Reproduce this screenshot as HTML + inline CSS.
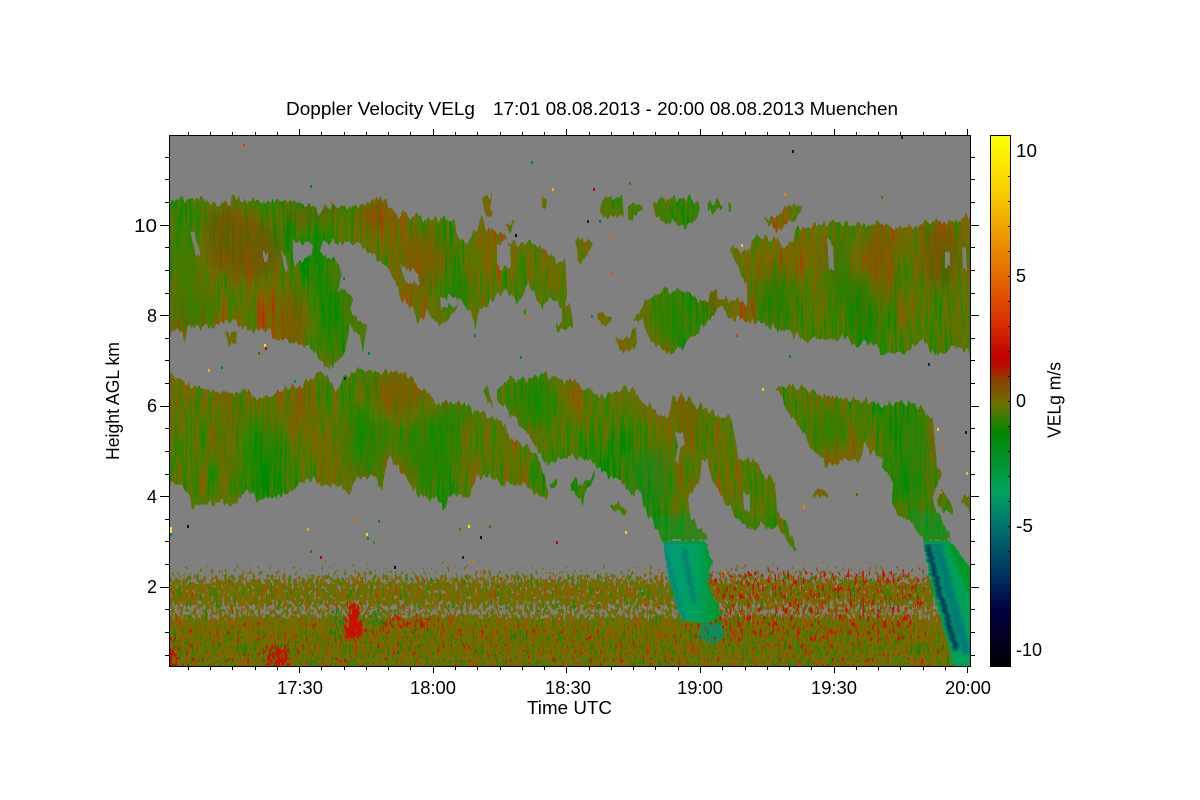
<!DOCTYPE html>
<html lang="en">
<head>
<meta charset="utf-8">
<title>Doppler Velocity VELg</title>
<style>
html,body{margin:0;padding:0;background:#fff;width:1200px;height:800px;overflow:hidden}
svg{display:block}
text{font-family:"Liberation Sans",sans-serif;font-size:18px;fill:#000}
</style>
</head>
<body>
<svg width="1200" height="800" viewBox="0 0 1200 800" xmlns="http://www.w3.org/2000/svg">
<defs>
<path id="clouds" fill-rule="evenodd" clip-rule="evenodd" d="
M165 203L178 199 207 199 211 207 214 203 230 203 231 198 240 198 243 201 290 201 305 204 317 209 319 212 322 207 337 205 363 205 372 199 381 198 390 207 398 215 406 213 427 222 440 217 455 223 458 237 465 243 477 230 482 218 487 230 503 233 508 243 520 242 532 243 550 256 553 258 558 262 565 258 566 277 567 297 565 303 570 307 573 320 573 327 557 330 556 323 562 320 562 307 557 303 550 297 542 308 533 290 528 283 518 303 507 290 493 298 485 310 480 307 475 330 470 312 458 297 457 307 442 327 427 313 417 320 412 305 400 300 398 287 392 278 390 270 377 258 363 245 350 245 343 243 323 243 320 250 323 258 335 258 342 272 338 288 353 298 350 310 367 327 363 350 360 337 350 325 345 350 337 363 327 368 317 357 310 347 290 340 278 340 267 329 247 331 233 320 210 327 187 327 185 340 178 329 165 335Z
M190 231L194 232 200 250 200 254 196 253 192 240Z
M263 250L268 249 268 258 263 258Z
M281 252L286 254 288 270 284 266Z
M293 245L306 243 313 250 311 258 300 262 296 268 293 258Z
M400 265L410 270 418 272 420 285 405 282Z
M440 298L457 297 458 305 447 306 441 310Z
M497 245L510 240 511 268 497 268Z
M482 197L492 196 490 205 493 215 488 218 484 212Z
M225 332L237 332 236 343 228 343Z
M505 228L510 222 515 227 512 230Z
M542 198L547 198 546 207 542 207Z
M601 205L604 198 612 197 622 198 624 215 616 216 612 215 608 216 600 214Z
M628 205L642 205 643 210 636 215 632 220 628 218Z
M653 205L660 198 668 199 690 198 697 203 700 205 697 218 693 225 682 226 675 224 668 223 660 219 655 215Z
M708 204L716 202 723 204 720 210 712 212 708 212Z
M728 202L731 202 731 211 729 211Z
M762 223L772 218 780 214 785 207 795 206 803 207 800 215 795 222 785 224 780 228 777 233 770 225Z
M575 242L581 239 593 243 590 252 585 256 581 265 578 262 577 250Z
M597 314L603 316 612 319 610 325 604 325 602 333 600 325Z
M615 340L625 338 633 330 636 328 637 345 630 350 620 350Z
M633 322L638 313 645 302 655 296 662 291 675 290 688 293 695 297 700 301 708 302 711 291 717 291 718 300 728 299 745 302 747 303 747 283 743 277 738 267 730 250 732 245 742 253 750 250 752 238 767 237 778 240 783 248 793 240 795 230 805 227 837 223 867 225 880 223 893 227 917 227 927 222 950 222 967 217 975 215 975 352 970 352 953 347 943 357 933 353 923 340 908 352 887 350 883 355 875 343 850 345 848 337 823 340 813 337 807 342 790 332 780 330 767 325 747 320 727 317 723 308 717 308 707 323 697 335 690 338 683 348 665 352 653 343 647 333 643 320Z
M827 240L833 242 834 270 829 268Z
M945 253L950 253 950 267 945 265Z
M962 247L966 247 967 270 963 268Z
M165 372L170 373 185 383 203 387 225 393 247 392 257 398 273 397 282 388 300 388 308 382 318 372 332 380 335 390 343 380 358 370 383 372 403 373 417 383 433 397 435 403 460 402 473 410 500 420 512 440 527 448 538 457 543 473 548 487 548 497 542 497 527 485 503 483 493 478 478 477 467 498 453 493 443 508 437 498 420 497 413 490 400 470 390 458 387 463 382 488 375 477 357 477 350 493 343 487 320 485 313 477 293 490 273 498 257 500 247 488 233 508 223 502 197 505 193 512 188 493 182 485 165 485Z
M483 387L487 388 493 405 493 408 488 403Z
M497 390L510 377 525 380 543 375 567 380 590 390 600 398 620 390 632 388 643 403 655 410 665 418 668 418 672 400 680 396 700 405 715 412 732 417 738 457 757 463 767 477 775 480 777 513 785 517 790 533 797 548 792 547 780 530 760 525 757 530 747 528 740 520 727 505 715 487 707 460 702 460 700 477 688 500 690 517 707 537 707 541 663 541 653 523 643 507 642 490 630 495 623 487 615 477 610 478 600 468 585 458 570 455 545 465 542 457 527 433 513 417 497 400Z
M675 432L683 433 685 445 680 453 678 463 675 460 678 448Z
M743 493L750 493 750 513 744 510Z
M610 505L618 503 627 507 626 511 612 510Z
M813 490L822 490 828 493 828 497 814 497Z
M570 482L576 481 582 487 590 482 594 470 595 478 590 488 585 495 583 503 578 497 572 492Z
M550 481L557 480 557 486 551 487Z
M775 388L800 385 813 393 833 397 870 402 883 407 897 402 917 405 933 420 937 467 942 473 940 480 935 490 933 502 947 530 951 541 923 541 910 520 898 520 892 500 893 483 887 470 882 470 883 457 870 452 865 443 860 463 850 458 827 467 808 443 797 420 788 413 782 397Z
M937 495L943 493 953 505 953 515 945 512 938 505Z
M960 497L966 495 975 500 975 513 968 510Z"/>
<clipPath id="cc"><use href="#clouds"/></clipPath>
<clipPath id="plot"><rect x="170" y="136" width="800" height="530"/></clipPath>
<clipPath id="s1"><path d="M663 540L705 540 712 560 708 583 722 615 712 622 700 623 681 620 668 577Z"/></clipPath>
<clipPath id="s2"><path d="M923 540L950 540 958 552 970 567 975 567 975 666 953 666 947 640 935 600 928 570Z"/></clipPath>
<clipPath id="above"><rect x="600" y="541" width="400" height="130"/></clipPath>

<filter id="disp" filterUnits="userSpaceOnUse" x="150" y="125" width="840" height="560" color-interpolation-filters="sRGB">
  <feTurbulence type="fractalNoise" baseFrequency=".25 .03" numOctaves="2" seed="4"/>
  <feColorMatrix values="1 0 0 0 0 0 0 0 0 .5 0 0 1 0 0 0 0 0 0 1" result="j"/>
  <feDisplacementMap in="SourceGraphic" in2="j" scale="16" xChannelSelector="G" yChannelSelector="R"/>
</filter>

<filter id="dispx" filterUnits="userSpaceOnUse" x="640" y="530" width="340" height="145" color-interpolation-filters="sRGB">
  <feTurbulence type="fractalNoise" baseFrequency=".03 .3" numOctaves="2" seed="9"/>
  <feColorMatrix values="1 0 0 0 0 0 0 0 0 .5 0 0 1 0 0 0 0 0 0 1" result="j"/>
  <feDisplacementMap in="SourceGraphic" in2="j" scale="5" xChannelSelector="R" yChannelSelector="G"/>
</filter>

<filter id="tex" filterUnits="userSpaceOnUse" x="150" y="125" width="840" height="560" color-interpolation-filters="sRGB">
  <feTurbulence type="fractalNoise" baseFrequency=".4 .024" numOctaves="3" seed="11"/>
  <feColorMatrix values="1 0 0 0 0 1 0 0 0 0 1 0 0 0 0 0 0 0 0 1" result="fine"/>
  <feTurbulence type="fractalNoise" baseFrequency=".014 .007" numOctaves="2" seed="5"/>
  <feColorMatrix values="1 0 0 0 0 1 0 0 0 0 1 0 0 0 0 0 0 0 0 1" result="coarse"/>
  <feComposite in="fine" in2="coarse" operator="arithmetic" k1="0" k2=".85" k3=".6" k4="-.225"/>
  <feComponentTransfer>
    <feFuncR type="table" tableValues="0 0 0 .1 .24 .35 .44 .53 .64 .74 .8"/>
    <feFuncG type="table" tableValues=".5 .52 .54 .54 .5 .46 .43 .37 .28 .16 .1"/>
    <feFuncB type="table" tableValues="0 0 0 0 0 0 0 0 0 0 0"/>
    <feFuncA type="linear" slope="1" intercept="0"/>
  </feComponentTransfer>
  <feComposite in2="SourceAlpha" operator="in"/>
</filter>

<filter id="spk" filterUnits="userSpaceOnUse" x="170" y="540" width="800" height="126" color-interpolation-filters="sRGB">
  <feTurbulence type="fractalNoise" baseFrequency=".36 .2" numOctaves="2" seed="3"/>
  <feColorMatrix values="0 0 0 0 0 0 0 0 0 0 0 0 0 0 0 1 0 0 0 0" result="na"/>
  <feComposite in="na" in2="SourceAlpha" operator="arithmetic" k1="0" k2="1" k3="1" k4="-1"/>
  <feComponentTransfer result="mask"><feFuncA type="linear" slope="40" intercept="0"/></feComponentTransfer>
  <feTurbulence type="fractalNoise" baseFrequency=".38 .07" numOctaves="3" seed="21"/>
  <feColorMatrix values="1 0 0 0 0 1 0 0 0 0 1 0 0 0 0 0 0 0 0 1"/>
  <feComponentTransfer>
    <feFuncR type="table" tableValues=".1 .1 .15 .25 .38 .46 .52 .58 .66 .74 .8"/>
    <feFuncG type="table" tableValues=".5 .5 .5 .48 .46 .43 .4 .34 .26 .12 .05"/>
    <feFuncB type="table" tableValues="0 0 0 0 0 0 0 0 0 0 0"/>
  </feComponentTransfer>
  <feComposite in2="mask" operator="in"/>
</filter>

<filter id="spkR" filterUnits="userSpaceOnUse" x="170" y="540" width="800" height="126" color-interpolation-filters="sRGB">
  <feTurbulence type="fractalNoise" baseFrequency=".4 .14" numOctaves="2" seed="31"/>
  <feColorMatrix values="0 0 0 0 0 0 0 0 0 0 0 0 0 0 0 1 0 0 0 0" result="na"/>
  <feComposite in="na" in2="SourceAlpha" operator="arithmetic" k1="0" k2="1" k3="1" k4="-1"/>
  <feComponentTransfer result="mask"><feFuncA type="linear" slope="40" intercept="0"/></feComponentTransfer>
  <feFlood flood-color="#c81000"/>
  <feComposite in2="mask" operator="in"/>
</filter>

<filter id="spkG" filterUnits="userSpaceOnUse" x="170" y="540" width="800" height="126" color-interpolation-filters="sRGB">
  <feTurbulence type="fractalNoise" baseFrequency=".4 .2" numOctaves="2" seed="41"/>
  <feColorMatrix values="0 0 0 0 0 0 0 0 0 0 0 0 0 0 0 1 0 0 0 0" result="na"/>
  <feComposite in="na" in2="SourceAlpha" operator="arithmetic" k1="0" k2="1" k3="1" k4="-1"/>
  <feComponentTransfer result="mask"><feFuncA type="linear" slope="40" intercept="0"/></feComponentTransfer>
  <feFlood flood-color="#008a20"/>
  <feComposite in2="mask" operator="in"/>
</filter>

<filter id="spkT" filterUnits="userSpaceOnUse" x="170" y="540" width="800" height="126" color-interpolation-filters="sRGB">
  <feTurbulence type="fractalNoise" baseFrequency=".4 .3" numOctaves="2" seed="51"/>
  <feColorMatrix values="0 0 0 0 0 0 0 0 0 0 0 0 0 0 0 1 0 0 0 0" result="na"/>
  <feComposite in="na" in2="SourceAlpha" operator="arithmetic" k1="0" k2="1" k3="1" k4="-1"/>
  <feComponentTransfer result="mask"><feFuncA type="linear" slope="40" intercept="0"/></feComponentTransfer>
  <feFlood flood-color="#009068"/>
  <feComposite in2="mask" operator="in"/>
</filter>

<filter id="b8" x="-100%" y="-100%" width="300%" height="300%"><feGaussianBlur stdDeviation="7"/></filter>
<filter id="b3" x="-100%" y="-100%" width="300%" height="300%"><feGaussianBlur stdDeviation="3"/></filter>
<filter id="bd" filterUnits="userSpaceOnUse" x="150" y="540" width="840" height="146"><feGaussianBlur stdDeviation="4"/></filter>
<filter id="b1" filterUnits="userSpaceOnUse" x="650" y="530" width="330" height="145"><feGaussianBlur stdDeviation="1.6"/></filter>

<linearGradient id="dens" gradientUnits="userSpaceOnUse" x1="0" y1="560" x2="0" y2="666">
  <stop offset="0" stop-opacity=".2"/>
  <stop offset=".094" stop-opacity=".34"/>
  <stop offset=".17" stop-opacity=".5"/>
  <stop offset=".236" stop-opacity=".66"/>
  <stop offset=".349" stop-opacity=".7"/>
  <stop offset=".406" stop-opacity=".62"/>
  <stop offset=".453" stop-opacity=".52"/>
  <stop offset=".509" stop-opacity=".52"/>
  <stop offset=".547" stop-opacity=".62"/>
  <stop offset=".585" stop-opacity=".82"/>
  <stop offset="1" stop-opacity=".95"/>
</linearGradient>

<linearGradient id="cb" x1="0" y1="0" x2="0" y2="1">
  <stop offset="0" stop-color="#ffff00"/>
  <stop offset=".103" stop-color="#f8d000"/>
  <stop offset=".229" stop-color="#e88000"/>
  <stop offset=".291" stop-color="#e05800"/>
  <stop offset=".353" stop-color="#d83000"/>
  <stop offset=".417" stop-color="#c00000"/>
  <stop offset=".436" stop-color="#b81000"/>
  <stop offset=".46" stop-color="#8a4000"/>
  <stop offset=".504" stop-color="#707000"/>
  <stop offset=".56" stop-color="#008800"/>
  <stop offset=".673" stop-color="#00a060"/>
  <stop offset=".737" stop-color="#007070"/>
  <stop offset=".831" stop-color="#003060"/>
  <stop offset=".893" stop-color="#000040"/>
  <stop offset="1" stop-color="#000000"/>
</linearGradient>

<linearGradient id="sg1" gradientUnits="userSpaceOnUse" x1="663" y1="0" x2="718" y2="0">
  <stop offset="0" stop-color="#009a78"/>
  <stop offset=".55" stop-color="#00a060"/>
  <stop offset="1" stop-color="#009830"/>
</linearGradient>
</defs>

<rect width="1200" height="800" fill="#fff"/>
<rect x="170" y="136" width="800" height="530" fill="#808080"/>

<g clip-path="url(#plot)">
  <!-- low level noise -->
  <g filter="url(#spk)"><rect x="170" y="560" width="800" height="106" fill="url(#dens)"/></g>
  <g filter="url(#spkR)">
    <g filter="url(#bd)">
      <rect x="150" y="620" width="540" height="62" fill="#000" fill-opacity=".31"/>
      <rect x="690" y="566" width="240" height="74" fill="#000" fill-opacity=".39"/>
      <rect x="690" y="640" width="300" height="40" fill="#000" fill-opacity=".31"/>
      <rect x="345" y="600" width="17" height="38" fill="#000" fill-opacity=".66"/>
      <rect x="380" y="608" width="60" height="20" fill="#000" fill-opacity=".34"/>
      <rect x="150" y="645" width="28" height="30" fill="#000" fill-opacity=".42"/>
      <rect x="265" y="645" width="25" height="30" fill="#000" fill-opacity=".4"/>
    </g>
  </g>
  <g filter="url(#spkG)">
    <g filter="url(#bd)">
      <rect x="330" y="605" width="15" height="26" fill="#000" fill-opacity=".5"/>
      <rect x="365" y="605" width="20" height="24" fill="#000" fill-opacity=".46"/>
      <rect x="150" y="630" width="840" height="50" fill="#000" fill-opacity=".32"/>
    </g>
  </g>
  <g filter="url(#spkT)">
    <g filter="url(#bd)"><rect x="698" y="620" width="28" height="24" fill="#000" fill-opacity=".65"/></g>
  </g>

  <!-- clouds -->
  <g filter="url(#disp)">
    <g filter="url(#tex)"><use href="#clouds" fill="#000"/></g>
    <g clip-path="url(#cc)">
      <g filter="url(#b8)" opacity=".5">
        <ellipse cx="228" cy="240" rx="32" ry="32" fill="#b03000"/>
        <ellipse cx="375" cy="215" rx="16" ry="12" fill="#b03000"/>
        <ellipse cx="295" cy="318" rx="13" ry="28" fill="#8a4c00"/>
        <ellipse cx="310" cy="215" rx="30" ry="10" fill="#8a5000"/>
        <ellipse cx="712" cy="300" rx="8" ry="10" fill="#a83000"/>
        <ellipse cx="880" cy="265" rx="16" ry="42" fill="#8a4c00"/>
        <ellipse cx="940" cy="255" rx="18" ry="32" fill="#8a4000"/>
        <ellipse cx="425" cy="260" rx="25" ry="30" fill="#8a5000"/>
        <ellipse cx="300" cy="400" rx="8" ry="20" fill="#a04800"/>
        <ellipse cx="395" cy="395" rx="30" ry="18" fill="#8a5000"/>
        <ellipse cx="235" cy="440" rx="16" ry="40" fill="#7a6000"/>
        <ellipse cx="690" cy="420" rx="12" ry="24" fill="#8a5000"/>
        <ellipse cx="250" cy="250" rx="30" ry="30" fill="#8a4000"/>
        <ellipse cx="190" cy="250" rx="14" ry="40" fill="#2a8000"/>
        <ellipse cx="320" cy="285" rx="9" ry="70" fill="#008c00"/>
        <ellipse cx="338" cy="320" rx="9" ry="35" fill="#008c00"/>
        <ellipse cx="190" cy="310" rx="24" ry="20" fill="#108800"/>
        <ellipse cx="455" cy="290" rx="15" ry="18" fill="#008800"/>
        <ellipse cx="675" cy="322" rx="14" ry="28" fill="#008c00"/>
        <ellipse cx="840" cy="270" rx="12" ry="40" fill="#008800"/>
        <ellipse cx="865" cy="305" rx="14" ry="34" fill="#007f00"/>
        <ellipse cx="775" cy="300" rx="18" ry="28" fill="#108000"/>
        <ellipse cx="260" cy="450" rx="22" ry="30" fill="#008c00"/>
        <ellipse cx="365" cy="440" rx="22" ry="40" fill="#008c00"/>
        <ellipse cx="430" cy="450" rx="28" ry="36" fill="#008c00"/>
        <ellipse cx="455" cy="415" rx="14" ry="14" fill="#008c00"/>
        <ellipse cx="535" cy="405" rx="20" ry="24" fill="#008c00"/>
        <ellipse cx="650" cy="480" rx="22" ry="30" fill="#008c20"/>
        <ellipse cx="910" cy="455" rx="18" ry="50" fill="#008c10"/>
        <ellipse cx="830" cy="430" rx="14" ry="20" fill="#008c00"/>
      </g>
      <path d="M648 515L712 515 712 541 665 541Z" fill="#009838" opacity=".5" filter="url(#b3)"/>
      <path d="M905 510L950 510 952 541 922 541Z" fill="#009838" opacity=".5" filter="url(#b3)"/>
    </g>
  </g>

  <!-- fall streaks -->
  <g clip-path="url(#above)">
    <g filter="url(#dispx)">
      <g clip-path="url(#s1)">
        <rect x="655" y="530" width="75" height="100" fill="url(#sg1)"/>
        <g filter="url(#b1)" fill="none" stroke-linecap="round">
          <path d="M707 535L722 620" stroke="#009a28" stroke-width="7"/>
          <path d="M664 548L684 618" stroke="#008080" stroke-width="3"/>
          <path d="M684 550L694 602" stroke="#0a6c78" stroke-width="3"/>
        </g>
        <rect x="655" y="530" width="70" height="14" fill="#009a50"/>
      </g>
      <g clip-path="url(#s2)">
        <rect x="915" y="530" width="65" height="140" fill="#00a058"/>
        <g filter="url(#b1)" fill="none" stroke-linecap="round">
          <path d="M950 535L978 600 978 670" stroke="#009820" stroke-width="12"/>
          <path d="M937 544L949 590 966 650" stroke="#007c76" stroke-width="9"/>
          <path d="M928 546L939 590 956 648" stroke="#003262" stroke-width="5"/>
        </g>
        <rect x="915" y="530" width="40" height="14" fill="#009a50"/>
      </g>
    </g>
  </g>

  <!-- isolated pixels -->
  <g>
    <rect x="243" y="144" width="2" height="3" fill="#e04000"/><rect x="531" y="161" width="2" height="3" fill="#008060"/>
    <rect x="310" y="185" width="2" height="3" fill="#007a60"/><rect x="330" y="201" width="2" height="3" fill="#e05000"/>
    <rect x="515" y="234" width="2" height="3" fill="#000"/><rect x="264" y="344" width="2" height="3" fill="#ffe000"/>
    <rect x="265" y="347" width="2" height="3" fill="#c00000"/><rect x="258" y="352" width="2" height="3" fill="#8a5000"/>
    <rect x="208" y="369" width="2" height="3" fill="#f0b000"/><rect x="221" y="366" width="2" height="3" fill="#008060"/>
    <rect x="343" y="277" width="2" height="3" fill="#008060"/><rect x="368" y="352" width="2" height="3" fill="#008a20"/>
    <rect x="474" y="334" width="2" height="3" fill="#008060"/><rect x="520" y="356" width="2" height="3" fill="#008060"/>
    <rect x="524" y="309" width="2" height="6" fill="#408000"/><rect x="527" y="317" width="2" height="3" fill="#e07000"/>
    <rect x="344" y="377" width="2" height="3" fill="#003060"/><rect x="294" y="380" width="2" height="3" fill="#008060"/>
    <rect x="792" y="150" width="2" height="3" fill="#001050"/><rect x="901" y="136" width="2" height="3" fill="#003060"/>
    <rect x="593" y="188" width="2" height="3" fill="#c00000"/><rect x="552" y="188" width="2" height="3" fill="#f0b000"/>
    <rect x="784" y="193" width="2" height="3" fill="#e88000"/><rect x="587" y="220" width="2" height="3" fill="#003060"/>
    <rect x="599" y="220" width="2" height="3" fill="#007070"/><rect x="611" y="236" width="2" height="3" fill="#e07000"/>
    <rect x="610" y="271" width="2" height="3" fill="#e05000"/><rect x="741" y="244" width="2" height="3" fill="#ffd000"/>
    <rect x="591" y="315" width="2" height="3" fill="#008060"/><rect x="736" y="334" width="2" height="3" fill="#d84000"/>
    <rect x="789" y="355" width="2" height="3" fill="#008060"/><rect x="928" y="363" width="2" height="3" fill="#003060"/>
    <rect x="762" y="388" width="2" height="3" fill="#ffd000"/><rect x="881" y="196" width="2" height="3" fill="#408000"/>
    <rect x="629" y="182" width="2" height="3" fill="#408000"/><rect x="170" y="527" width="2" height="6" fill="#ffe000"/>
    <rect x="170" y="533" width="2" height="3" fill="#008060"/><rect x="187" y="525" width="2" height="3" fill="#001050"/>
    <rect x="307" y="528" width="2" height="3" fill="#f0b000"/><rect x="354" y="517" width="2" height="3" fill="#e07000"/>
    <rect x="378" y="520" width="2" height="3" fill="#008a20"/><rect x="366" y="533" width="2" height="3" fill="#ffd000"/>
    <rect x="367" y="537" width="2" height="3" fill="#008a50"/><rect x="373" y="541" width="2" height="3" fill="#408000"/>
    <rect x="468" y="525" width="2" height="3" fill="#ffe000"/><rect x="459" y="528" width="2" height="3" fill="#408000"/>
    <rect x="480" y="536" width="2" height="3" fill="#001050"/><rect x="489" y="525" width="2" height="3" fill="#8a5000"/>
    <rect x="556" y="541" width="2" height="3" fill="#c00000"/><rect x="462" y="556" width="2" height="3" fill="#003060"/>
    <rect x="472" y="560" width="2" height="3" fill="#e07000"/><rect x="394" y="566" width="2" height="3" fill="#001050"/>
    <rect x="320" y="556" width="2" height="3" fill="#c00000"/><rect x="310" y="550" width="2" height="3" fill="#8a5000"/>
    <rect x="937" y="428" width="2" height="3" fill="#ffd000"/><rect x="965" y="431" width="2" height="3" fill="#001050"/>
    <rect x="942" y="447" width="2" height="3" fill="#e07000"/><rect x="966" y="472" width="2" height="3" fill="#f0c000"/>
    <rect x="803" y="505" width="2" height="4" fill="#e88000"/><rect x="625" y="531" width="2" height="3" fill="#ffd000"/>
    <rect x="856" y="493" width="2" height="3" fill="#8a5000"/><rect x="940" y="491" width="2" height="3" fill="#e07000"/>
    <rect x="724" y="571" width="2" height="3" fill="#e07000"/>
  </g>
</g>

<!-- axes -->
<rect x="169.5" y="135.5" width="801" height="531" fill="none" stroke="#000" stroke-width="1"/>
<path fill="none" stroke="#000" stroke-width="1" d="
M188.5 135V132M210.5 135V132M232.5 135V132M255.5 135V132M277.5 135V132M321.5 135V132M344.5 135V132M366.5 135V132M388.5 135V132M410.5 135V132M455.5 135V132M477.5 135V132M500.5 135V132M522.5 135V132M544.5 135V132M589.5 135V132M611.5 135V132M633.5 135V132M655.5 135V132M678.5 135V132M722.5 135V132M745.5 135V132M767.5 135V132M789.5 135V132M811.5 135V132M856.5 135V132M878.5 135V132M900.5 135V132M923.5 135V132M945.5 135V132
M299.5 135V129M433.5 135V129M566.5 135V129M700.5 135V129M834.5 135V129M967.5 135V129
M188.5 667V670M210.5 667V670M232.5 667V670M255.5 667V670M277.5 667V670M321.5 667V670M344.5 667V670M366.5 667V670M388.5 667V670M410.5 667V670M455.5 667V670M477.5 667V670M500.5 667V670M522.5 667V670M544.5 667V670M589.5 667V670M611.5 667V670M633.5 667V670M655.5 667V670M678.5 667V670M722.5 667V670M745.5 667V670M767.5 667V670M789.5 667V670M811.5 667V670M856.5 667V670M878.5 667V670M900.5 667V670M923.5 667V670M945.5 667V670
M299.5 667V673M433.5 667V673M566.5 667V673M700.5 667V673M834.5 667V673M967.5 667V673
M165 157.5H169M165 179.5H169M165 202.5H169M165 247.5H169M165 270.5H169M165 293.5H169M165 338.5H169M165 360.5H169M165 383.5H169M165 428.5H169M165 451.5H169M165 474.5H169M165 519.5H169M165 541.5H169M165 564.5H169M165 609.5H169M165 632.5H169M165 655.5H169
M160 225.5H169M160 315.5H169M160 406.5H169M160 496.5H169M160 587.5H169
M971 157.5H975M971 179.5H975M971 202.5H975M971 247.5H975M971 270.5H975M971 293.5H975M971 338.5H975M971 360.5H975M971 383.5H975M971 428.5H975M971 451.5H975M971 474.5H975M971 519.5H975M971 541.5H975M971 564.5H975M971 609.5H975M971 632.5H975M971 655.5H975
M971 225.5H979M971 315.5H979M971 406.5H979M971 496.5H979M971 587.5H979"/>

<!-- colorbar -->
<rect x="990" y="135" width="21" height="532" fill="url(#cb)"/>
<path fill="none" stroke="#000" d="M990.5 667V135.5H1010.5V667"/>
<path fill="none" stroke="#000" d="M1008 176.5H1011M1008 201.5H1011M1008 226.5H1011M1008 251.5H1011M1008 276.5H1011M1008 301.5H1011M1008 326.5H1011M1008 351.5H1011M1008 376.5H1011M1008 401.5H1011M1008 426.5H1011M1008 451.5H1011M1008 476.5H1011M1008 501.5H1011M1008 526.5H1011M1008 551.5H1011"/>

<!-- text -->
<text x="286" y="115" textLength="189" lengthAdjust="spacingAndGlyphs">Doppler Velocity VELg</text>
<text x="493" y="115" textLength="405" lengthAdjust="spacingAndGlyphs">17:01 08.08.2013 - 20:00 08.08.2013 Muenchen</text>

<text x="277" y="694" textLength="46" lengthAdjust="spacingAndGlyphs">17:30</text>
<text x="410" y="694" textLength="46" lengthAdjust="spacingAndGlyphs">18:00</text>
<text x="545" y="694" textLength="46" lengthAdjust="spacingAndGlyphs">18:30</text>
<text x="677" y="694" textLength="46" lengthAdjust="spacingAndGlyphs">19:00</text>
<text x="811" y="694" textLength="46" lengthAdjust="spacingAndGlyphs">19:30</text>
<text x="945" y="694" textLength="46" lengthAdjust="spacingAndGlyphs">20:00</text>
<text x="527" y="714" textLength="85" lengthAdjust="spacingAndGlyphs">Time UTC</text>

<text x="134" y="232" textLength="23" lengthAdjust="spacingAndGlyphs">10</text>
<text x="147" y="322">8</text>
<text x="147" y="412">6</text>
<text x="147" y="503">4</text>
<text x="147" y="593">2</text>

<text transform="translate(119,460) rotate(-90)" textLength="118" lengthAdjust="spacingAndGlyphs">Height AGL km</text>
<text transform="translate(1060.5,438) rotate(-90)" textLength="76" lengthAdjust="spacingAndGlyphs">VELg m/s</text>

<text x="1016" y="157" textLength="21" lengthAdjust="spacingAndGlyphs">10</text>
<text x="1016" y="282">5</text>
<text x="1016" y="407">0</text>
<text x="1016" y="532" textLength="17" lengthAdjust="spacingAndGlyphs">-5</text>
<text x="1016" y="656" textLength="26" lengthAdjust="spacingAndGlyphs">-10</text>
</svg>
</body>
</html>
